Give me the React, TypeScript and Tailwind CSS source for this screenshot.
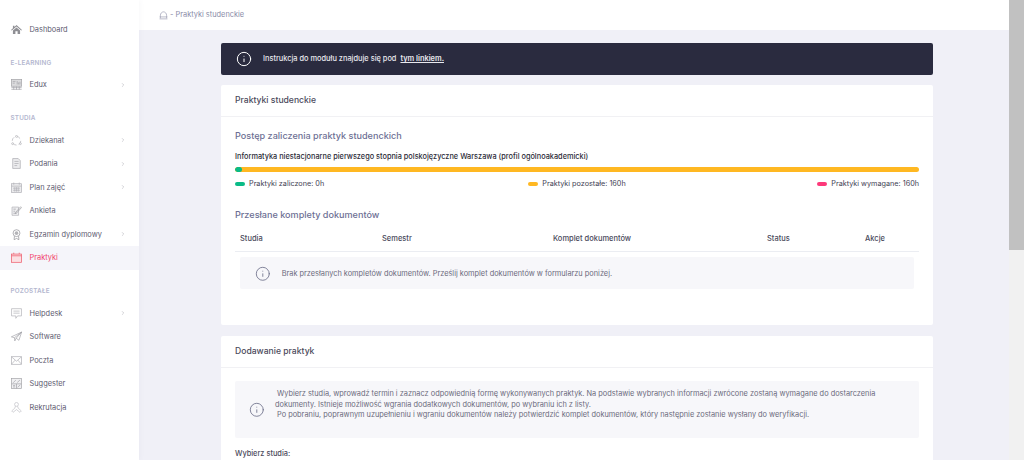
import { ChevronRight, Info } from "lucide-react";
import type { ReactNode } from "react";

const ICON = "h-[11px] w-[11px]";
const LINE = "#b0b0b6";

function HomeFill() {
  return (
    <svg viewBox="0 0 16 16" className={ICON} aria-hidden>
      <path d="M8 1.5 L16 8.6 L14.8 9.6 L8 3.8 L1.2 9.6 L0 8.6 L2.8 6.1 V2.5 H5 V4.2 Z M2.8 9.6 L8 5.2 L13.2 9.6 V14.5 H9.6 V10.6 H6.4 V14.5 H2.8 Z" fill="#8f8f94" />
    </svg>
  );
}

function BoardIcon() {
  return (
    <svg viewBox="0 0 16 16" className={ICON} fill="none" stroke="#a2a2a7" strokeWidth={1} aria-hidden>
      <rect x={0.5} y={0.5} width={15} height={10} fill="#dcdcde" />
      <path d="M2.5 3.5h4M2.5 6h3M9 3v5M11 5v3M13 4v4M.5 12.5h15M.5 15h15M4 11v4.5M8 11v4.5M12 11v4.5" />
    </svg>
  );
}

function CycleIcon() {
  return (
    <svg viewBox="0 0 16 16" className={ICON} fill="none" stroke={LINE} strokeWidth={1} aria-hidden>
      <circle cx={8} cy={8.5} r={6.2} strokeDasharray="6 3.5" />
      <circle cx={8} cy={2} r={1.4} fill="white" />
      <circle cx={2.4} cy={12.6} r={1.4} fill="white" />
      <circle cx={13.6} cy={12.6} r={1.4} fill="white" />
    </svg>
  );
}

function DocIcon() {
  return (
    <svg viewBox="0 0 16 16" className={ICON} fill="none" stroke={LINE} strokeWidth={1.1} aria-hidden>
      <path d="M2.5 .8H10.5L13.5 3.8V15.2H2.5Z" fill="#ececee" />
      <path d="M5 5H11M5 8H11M5 11H9" />
    </svg>
  );
}

function CalendarIcon() {
  return (
    <svg viewBox="0 0 16 16" className={ICON} fill="none" stroke={LINE} strokeWidth={1} aria-hidden>
      <rect x={0.8} y={2.5} width={14.4} height={12.7} fill="#ececee" />
      <path d="M.8 6H15.2M4 .8V4M12 .8V4M3 9H13M3 12H13M5.5 7.5V14M8 7.5V14M10.5 7.5V14" />
    </svg>
  );
}

function SurveyIcon() {
  return (
    <svg viewBox="0 0 16 16" className={ICON} fill="none" stroke={LINE} strokeWidth={1} aria-hidden>
      <path d="M1.5 3H11V15H1.5Z" fill="#f0f0f2" />
      <path d="M3.5 6H7M3.5 9H6M3.5 12H8M6.5 11 L14 2.5 L15.2 3.8 L8 11.8 L6.5 12.4Z" stroke="#9a9aa0" />
    </svg>
  );
}

function MedalIcon() {
  return (
    <svg viewBox="0 0 16 16" className={ICON} fill="none" stroke="#8f8f94" strokeWidth={1} aria-hidden>
      <circle cx={8} cy={6} r={5} />
      <circle cx={8} cy={6} r={2.6} fill="#b4b4b8" stroke="none" />
      <path d="M5 10.5L4.5 15.5L8 13.8L11.5 15.5L11 10.5" />
    </svg>
  );
}

function PracticeIcon() {
  return (
    <svg viewBox="0 0 16 16" className={ICON} fill="none" stroke="#ee5f6f" strokeWidth={1.1} aria-hidden>
      <rect x={0.8} y={3} width={14.4} height={12} fill="#fbe0e3" />
      <path d="M.8 5.5H15.2M4 1V3M12 1V3" />
    </svg>
  );
}

function ChatIcon() {
  return (
    <svg viewBox="0 0 16 16" className={ICON} fill="none" stroke={LINE} strokeWidth={1} aria-hidden>
      <path d="M.8 1H15.2V11.5H9.5L7 15V11.5H.8Z" />
      <path d="M3.5 4.5H12.5M3.5 7.5H12.5" />
    </svg>
  );
}

function PlaneIcon() {
  return (
    <svg viewBox="0 0 16 16" className={ICON} fill="none" stroke="#9a9aa0" strokeWidth={0.9} aria-hidden>
      <path d="M.5 8.5L15.5 1.5L11.5 13.5L7.5 10.5L5.5 14.5L5 9.8Z" />
      <path d="M5 9.8L15.5 1.5L7.5 10.5" />
    </svg>
  );
}

function MailIcon() {
  return (
    <svg viewBox="0 0 16 16" className={ICON} fill="none" stroke={LINE} strokeWidth={1} aria-hidden>
      <rect x={0.6} y={2.5} width={14.8} height={11} />
      <path d="M.6 2.5L8 9L15.4 2.5M.6 13.5L6 7.5M15.4 13.5L10 7.5" />
    </svg>
  );
}

function SuggestIcon() {
  return (
    <svg viewBox="0 0 16 16" className={ICON} fill="none" stroke="#a2a2a7" strokeWidth={1} aria-hidden>
      <rect x={0.8} y={0.8} width={14.4} height={14.4} fill="#f0f0f2" />
      <path d="M.8 8.5H15.2M8 8.5V15.2M3 7L7 3M9 6.5L13 3M3 11h3M3 13h3M9.5 13.5l4-3.5" />
    </svg>
  );
}

function PersonIcon() {
  return (
    <svg viewBox="0 0 16 16" className={ICON} fill="none" stroke="#c0c0c6" strokeWidth={1} aria-hidden>
      <circle cx={8} cy={3.5} r={2.8} />
      <path d="M6.5 6L5.5 9L1 13L3 15L8 11L13 15L15 13L10.5 9L9.5 6" />
    </svg>
  );
}

function NavItem({ icon, label, arrow, active }: { icon: ReactNode; label: string; arrow?: boolean; active?: boolean }) {
  return (
    <div className={`flex h-[23.5px] shrink-0 items-center pl-[10.5px] pr-[13px] ${active ? "bg-[#f5f5fa] text-[#f1416c]" : "text-[#5e5b70]"}`}>
      <span className="flex w-[19px] shrink-0">{icon}</span>
      <span className="flex-1 text-[7.4px]">{label}</span>
      {arrow && <ChevronRight className="h-[6px] w-[6px] text-[#a8a8b0]" strokeWidth={2} />}
    </div>
  );
}

function NavHeading({ children }: { children: ReactNode }) {
  return (
    <div className="mt-[17.5px] mb-[6.5px] h-[8px] pl-[10.5px] text-[6.3px] leading-[8px] font-semibold tracking-[0.2px] text-[#b4b7cf]">
      {children}
    </div>
  );
}

function Sidebar() {
  return (
    <aside className="z-10 flex h-full w-[139px] shrink-0 flex-col bg-white pt-[17.5px] shadow-[0_0_6px_rgba(80,80,120,0.06)]">
      <NavItem icon={<HomeFill />} label="Dashboard" />
      <NavHeading>E-LEARNING</NavHeading>
      <NavItem icon={<BoardIcon />} label="Edux" arrow />
      <NavHeading>STUDIA</NavHeading>
      <NavItem icon={<CycleIcon />} label="Dziekanat" arrow />
      <NavItem icon={<DocIcon />} label="Podania" arrow />
      <NavItem icon={<CalendarIcon />} label="Plan zajęć" arrow />
      <NavItem icon={<SurveyIcon />} label="Ankieta" />
      <NavItem icon={<MedalIcon />} label="Egzamin dyplomowy" arrow />
      <NavItem icon={<PracticeIcon />} label="Praktyki" active />
      <NavHeading>POZOSTAŁE</NavHeading>
      <NavItem icon={<ChatIcon />} label="Helpdesk" arrow />
      <NavItem icon={<PlaneIcon />} label="Software" />
      <NavItem icon={<MailIcon />} label="Poczta" />
      <NavItem icon={<SuggestIcon />} label="Suggester" />
      <NavItem icon={<PersonIcon />} label="Rekrutacja" />
    </aside>
  );
}

function TopBar() {
  return (
    <div className="flex h-[30px] shrink-0 items-center gap-[2px] bg-white pl-[20px] text-[7.4px] text-[#8a8ca8]">
      <svg viewBox="0 0 16 16" className="h-[9px] w-[9px]" fill="none" stroke="#a0a2b6" strokeWidth={1.3} aria-hidden>
        <path d="M2.5 13V7.5C2.5 4.5 5 1.5 8 1.5S13.5 4.5 13.5 7.5V13M1 10.5H15M1 14H15" />
      </svg>
      <span>- Praktyki studenckie</span>
    </div>
  );
}

function Legend({ color, label, place }: { color: string; label: string; place: string }) {
  return (
    <div className={`flex items-center gap-[4px] text-[7.25px] text-[#3f4254] ${place}`}>
      <span className={`h-[4px] w-[10px] rounded-full ${color}`} />
      <span>{label}</span>
    </div>
  );
}

function CardHeader({ title }: { title: string }) {
  return (
    <div className="flex h-[32px] items-center border-b border-[#f1f1f4] px-[14px] text-[8.6px] font-medium text-[#4b4a5c]">
      {title}
    </div>
  );
}

function Content() {
  return (
    <main className="flex-1 overflow-hidden">
      <TopBar />
      <div className="ml-[82px] flex w-[712px] flex-col pt-[13px]">
        <div className="flex h-[32px] items-center rounded-[2px] bg-[#2a2b3f] pl-[14.5px] text-[7.4px] font-medium text-[#e8e8ee]">
          <Info className="mr-[11.5px] h-[16px] w-[16px] text-white" strokeWidth={1.5} />
          <span>Instrukcja do modułu znajduje się pod</span>
          <span className="ml-[4px] font-semibold underline">tym linkiem.</span>
        </div>

        <section className="mt-[10px] h-[240px] rounded-[2px] bg-white">
          <CardHeader title="Praktyki studenckie" />
          <div className="px-[14px] pt-[12px]">
            <h2 className="text-[9.1px] leading-[14px] font-medium text-[#6d6f94]">Postęp zaliczenia praktyk studenckich</h2>
            <p className="mt-[7.5px] text-[7.35px] leading-[11px] font-medium text-[#2b2b38]">
              Informatyka niestacjonarne pierwszego stopnia polskojęzyczne Warszawa (profil ogólnoakademicki)
            </p>
            <div className="mt-[5px] flex h-[5px] overflow-hidden rounded-full bg-[#ffb822]">
              <div className="w-[7px] rounded-full bg-[#0abb87]" />
            </div>
            <div className="mt-[7px] grid grid-cols-3">
              <Legend color="bg-[#0abb87]" label="Praktyki zaliczone: 0h" place="justify-self-start" />
              <Legend color="bg-[#ffb822]" label="Praktyki pozostałe: 160h" place="justify-self-center" />
              <Legend color="bg-[#fd397a]" label="Praktyki wymagane: 160h" place="justify-self-end" />
            </div>
            <h2 className="mt-[18.5px] text-[9.1px] leading-[14px] font-medium text-[#6d6f94]">Przesłane komplety dokumentów</h2>
            <div className="mt-[11px] grid h-[19px] grid-cols-[142px_171px_214px_98px_1fr] items-center border-b border-[#ebedf2] pb-[6px] pl-[5px] text-[7.5px] font-medium text-[#4b4a5c]">
              <span>Studia</span>
              <span>Semestr</span>
              <span>Komplet dokumentów</span>
              <span>Status</span>
              <span>Akcje</span>
            </div>
            <div className="mx-[5px] mt-[5.5px] flex h-[32px] items-center rounded-[2px] bg-[#f7f7fa] pl-[14.7px] text-[7.38px] text-[#6b6a7c]">
              <Info className="mr-[11.4px] h-[15.6px] w-[15.6px] text-[#6d6f8a]" strokeWidth={1.3} />
              Brak przesłanych kompletów dokumentów. Prześlij komplet dokumentów w formularzu poniżej.
            </div>
          </div>
        </section>

        <section className="mt-[11px] h-[200px] rounded-[2px] bg-white">
          <CardHeader title="Dodawanie praktyk" />
          <div className="px-[14px] pt-[13px]">
            <div className="flex h-[57px] items-center rounded-[2px] bg-[#f7f7fa] pl-[14.4px] text-[7.38px] leading-[10.4px] text-[#6b6a7c]">
              <Info className="mr-[10px] h-[15.6px] w-[15.6px] shrink-0 text-[#6d6f8a]" strokeWidth={1.3} />
              <div className="-mt-[9px]">
                <p className="pl-[2px]">Wybierz studia, wprowadź termin i zaznacz odpowiednią formę wykonywanych praktyk. Na podstawie wybranych informacji zwrócone zostaną wymagane do dostarczenia</p>
                <p>dokumenty. Istnieje możliwość wgrania dodatkowych dokumentów, po wybraniu ich z listy.</p>
                <p className="pl-[2px]">Po pobraniu, poprawnym uzupełnieniu i wgraniu dokumentów należy potwierdzić komplet dokumentów, który następnie zostanie wysłany do weryfikacji.</p>
              </div>
            </div>
            <p className="mt-[10px] text-[7.4px] leading-[11px] font-medium text-[#4b4a5c]">Wybierz studia:</p>
          </div>
        </section>
      </div>
    </main>
  );
}

function Scrollbar() {
  return (
    <div className="h-full w-[15px] shrink-0 bg-[#f1f1f1]">
      <div className="h-[250px] bg-[#c1c1c1]" />
    </div>
  );
}

export default function App() {
  return (
    <div className="flex h-[460px] w-[1024px] overflow-hidden bg-[#f0f0f7] font-['Inter','Liberation_Sans',sans-serif]">
      <Sidebar />
      <Content />
      <Scrollbar />
    </div>
  );
}
